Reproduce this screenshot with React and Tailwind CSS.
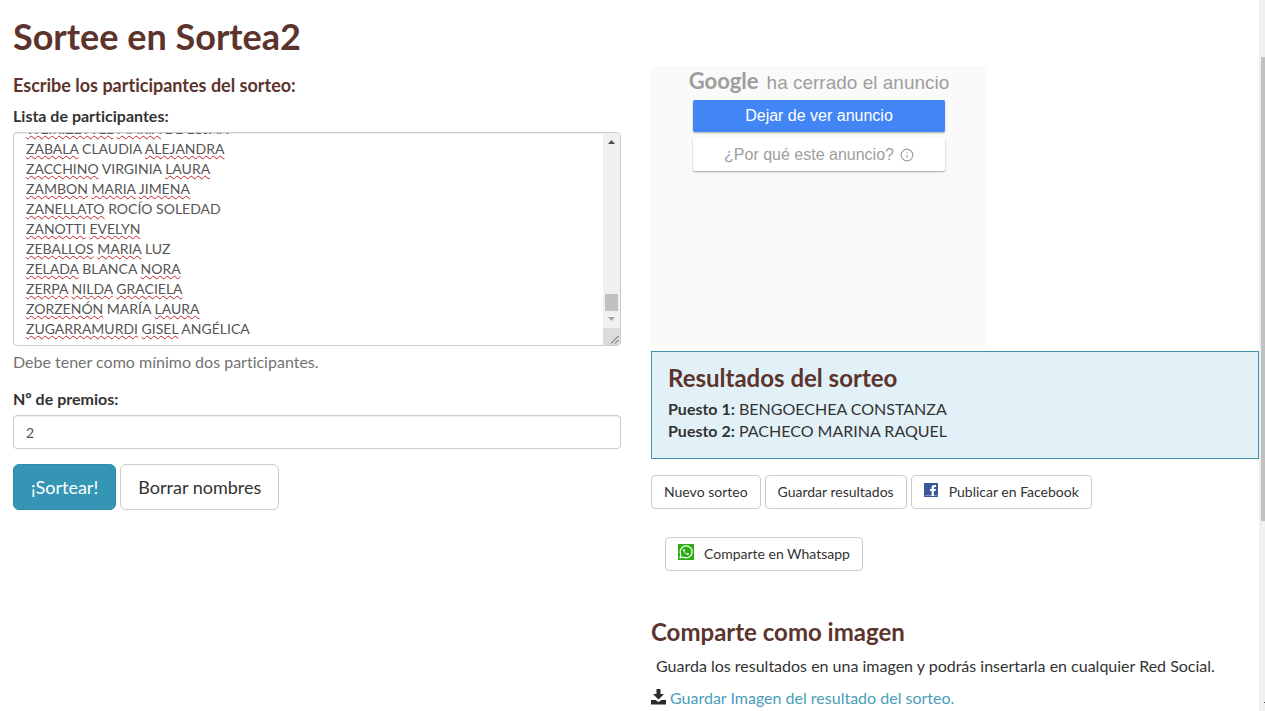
import { useEffect, useRef, useState } from 'react';
import { Info } from 'lucide-react';

// Names between asterisks are the ones the dictionary does not know
const PARTICIPANTS = [
  '*WEIRIZETTEL* *MARIA* DE LUJAN',
  '*ZABALA* CLAUDIA *ALEJANDRA*',
  '*ZACCHINO* VIRGINIA *LAURA*',
  '*ZAMBON* *MARIA* *JIMENA*',
  '*ZANELLATO* ROCÍO SOLEDAD',
  '*ZANOTTI* *EVELYN*',
  '*ZEBALLOS* *MARIA* LUZ',
  '*ZELADA* BLANCA *NORA*',
  '*ZERPA* *NILDA* *GRACIELA*',
  '*ZORZENÓN* MARÍA *LAURA*',
  '*ZUGARRAMURDI* *GISEL* ANGÉLICA',
];

const UNKNOWN = new Set(
  PARTICIPANTS.flatMap((line) => line.match(/\*[^*]+\*/g) || []).map((word) => word.replaceAll('*', ''))
);

const WINNERS = ['BENGOECHEA CONSTANZA', 'PACHECO MARINA RAQUEL'];

const ParticipantList = ({ value, onChange }) => {
  const areaRef = useRef(null);
  const marksRef = useRef(null);

  const syncScroll = () => {
    marksRef.current.scrollTop = areaRef.current.scrollTop;
  };

  useEffect(() => {
    areaRef.current.scrollTop = areaRef.current.scrollHeight;
    syncScroll();
  }, []);

  return (
    <div className="flex h-[214px] overflow-hidden rounded border border-[#ccc] bg-white shadow-[inset_0_1px_1px_rgba(0,0,0,0.075)]">
      <div className="relative min-w-0 flex-1">
        {/* Spelling marks behind the text */}
        <div
          ref={marksRef}
          aria-hidden="true"
          className="absolute inset-0 overflow-hidden px-3 py-1.5 text-sm leading-5 whitespace-pre-wrap text-transparent"
        >
          {value.split(/(\s+)/).map((word, i) =>
            UNKNOWN.has(word) ? (
              <span
                key={i}
                className="underline decoration-[#c0202c] decoration-wavy decoration-1 underline-offset-1 [text-decoration-skip-ink:none]"
              >
                {word}
              </span>
            ) : (
              word
            )
          )}
        </div>
        <textarea
          id="participants"
          ref={areaRef}
          value={value}
          onChange={onChange}
          onScroll={syncScroll}
          spellCheck={false}
          className="relative block h-full w-full resize-none bg-transparent px-3 py-1.5 text-sm leading-5 text-[#555] outline-none [scrollbar-width:none]"
        />
      </div>
      <div className="flex w-[17px] flex-col items-center bg-[#f0f0f0]">
        <svg className="mt-[7px] h-1 w-[7px]" viewBox="0 0 7 4" fill="#505050">
          <path d="M3.5 0 7 4H0z" />
        </svg>
        <div className="mt-auto h-[17px] w-[13px] bg-[#c1c1c1]" />
        <svg className="mt-[6px] mb-[7px] h-1 w-[7px]" viewBox="0 0 7 4" fill="#a3a3a3">
          <path d="M0 0h7L3.5 4z" />
        </svg>
        <svg className="h-[17px] w-[17px] bg-[#dcdcdc]" viewBox="0 0 17 17" stroke="#555" strokeWidth="1">
          <path d="M8 15.5 15.5 8M12 15.5 15.5 12" />
        </svg>
      </div>
    </div>
  );
};

const SmallButton = ({ children }) => (
  <button className="flex h-[34px] items-center rounded border border-[#ccc] bg-white px-3 text-sm text-[#333] hover:bg-gray-100">
    {children}
  </button>
);

const FacebookIcon = () => (
  <svg className="mr-[11px] mb-1 h-3.5 w-3.5" viewBox="0 0 14 14">
    <rect width="14" height="14" fill="#3b5998" />
    <rect x="1" y="12" width="12" height="1" fill="#7f95c4" />
    <path d="M7.6 13V8H6V6h1.6V4.6C7.6 2.9 8.6 2 10.2 2H12v2h-1.1c-.7 0-1 .3-1 .9V6h2l-.3 2H9.900V13z" fill="#fff" />
  </svg>
);

const WhatsappIcon = () => (
  <svg className="mr-[10px] mb-1 h-4 w-4" viewBox="0 0 16 16">
    <rect width="16" height="16" fill="#2bab14" />
    <path
      d="M2 14l.9-3.200A6 6 0 1 1 5.200 13.100z"
      fill="none"
      stroke="#fff"
      strokeWidth="1.2"
      strokeLinejoin="round"
    />
    <path
      d="M5.900 4.700c-.9.500-1 1.500-.5 2.500.8 1.600 2 2.800 3.700 3.500 1 .4 1.900 0 2.200-.9l-1.700-1-.9.900C7.600 9.200 6.900 8.400 6.400 7.400l.7-.8z"
      fill="#fff"
    />
  </svg>
);

const DownloadIcon = () => (
  <svg className="mr-1 mb-0.5 h-4 w-[15px]" viewBox="0 0 15 16" fill="#2b2b2b">
    <path d="M5.500 0h4v5H13L7.500 10.500 2 5h3.500z" />
    <path d="M0 11h4.500l3 2 3-2H15v4.500H0z" />
  </svg>
);

const App = () => {
  const [names, setNames] = useState(PARTICIPANTS.join('\n').replaceAll('*', ''));
  const [prizes, setPrizes] = useState('2');

  return (
    <div className="flex h-screen overflow-hidden bg-white font-['Lato',sans-serif] text-base leading-[22px] text-[#333] [font-variant-ligatures:none]">
      <main className="min-w-0 flex-1 pl-[13px]">
        <h1 className="pt-4 text-4xl leading-10 font-bold text-[#5c342d]">Sortee en Sortea2</h1>
        <div className="mt-2.5 grid grid-cols-2 gap-x-[30px]">
          <section>
            <h2 className="mt-[9px] text-lg leading-5 font-bold text-[#5c342d]">
              Escribe los participantes del sorteo:
            </h2>
            <label htmlFor="participants" className="mt-2.5 mb-[5px] block font-bold">
              Lista de participantes:
            </label>
            <ParticipantList value={names} onChange={(e) => setNames(e.target.value)} />
            <p className="mt-[5px] text-[#737373]">Debe tener como mínimo dos participantes.</p>
            <label htmlFor="prizes" className="mt-[15px] mb-[5px] block font-bold">
              Nº de premios:
            </label>
            <input
              id="prizes"
              type="text"
              value={prizes}
              onChange={(e) => setPrizes(e.target.value)}
              className="block h-[34px] w-full rounded border border-[#ccc] px-3 text-sm text-[#555] shadow-[inset_0_1px_1px_rgba(0,0,0,0.075)] outline-none"
            />
            <div className="mt-[15px] flex gap-1">
              <button className="h-[46px] rounded-md border border-[#2f8ba8] bg-[#3595b5] px-[17px] text-lg text-white">
                ¡Sortear!
              </button>
              <button
                onClick={() => setNames('')}
                className="h-[46px] rounded-md border border-[#ccc] bg-white px-[17px] text-lg"
              >
                Borrar nombres
              </button>
            </div>
          </section>

          <section>
            {/* Closed ad */}
            <div className="flex h-[280px] w-[336px] flex-col items-center bg-[#fafafa] font-['Liberation_Sans',sans-serif]">
              <p className="mt-0.5 flex items-baseline gap-2 text-[19px] leading-[26px] text-[#9e9e9e]">
                <span className="font-['Lato',sans-serif] text-[22px] font-bold">Google</span>
                ha cerrado el anuncio
              </p>
              <button className="mt-1 h-8 w-[252px] shrink-0 rounded-xs bg-[#4285f4] text-base text-white shadow-[0_1px_2px_rgba(0,0,0,0.3)]">
                Dejar de ver anuncio
              </button>
              <button className="mt-1.5 flex h-[33px] w-[252px] shrink-0 items-center justify-center gap-1.5 rounded-xs bg-white text-base text-[#9e9e9e] shadow-[0_1px_2px_rgba(0,0,0,0.35)]">
                ¿Por qué este anuncio?
                <Info className="h-3.5 w-3.5" />
              </button>
            </div>

            <div className="mt-[5px] h-[108px] border border-[#3e92aa] bg-[#e2f1f7] px-4 pt-3">
              <h2 className="text-2xl leading-7 font-bold text-[#5c342d]">Resultados del sorteo</h2>
              <ol className="mt-1.5">
                {WINNERS.map((name, i) => (
                  <li key={name}>
                    <b>Puesto {i + 1}:</b> {name}
                  </li>
                ))}
              </ol>
            </div>

            <div className="mt-4 flex gap-1">
              <SmallButton>Nuevo sorteo</SmallButton>
              <SmallButton>Guardar resultados</SmallButton>
              <SmallButton>
                <FacebookIcon />
                Publicar en Facebook
              </SmallButton>
            </div>
            <div className="mt-7 flex pl-3.5">
              <SmallButton>
                <WhatsappIcon />
                Comparte en Whatsapp
              </SmallButton>
            </div>

            <h2 className="mt-[47px] text-2xl leading-7 font-bold text-[#5c342d]">Comparte como imagen</h2>
            <p className="mt-[9px] px-[5px]">
              Guarda los resultados en una imagen y podrás insertarla en cualquier Red Social.
            </p>
            <a href="#imagen" className="mt-2.5 flex items-center text-[#4a9db9]">
              <DownloadIcon />
              Guardar Imagen del resultado del sorteo.
            </a>
          </section>
        </div>
      </main>

      {/* Page scrollbar */}
      <div className="flex w-1.5 flex-col bg-[#f0f0f0] pl-0.5">
        <div className="mt-[57px] h-[464px] bg-[#c1c1c1]" />
        <div className="mt-auto mb-2 h-px w-px self-end bg-[#505050]" />
      </div>
    </div>
  );
};

export default App;
